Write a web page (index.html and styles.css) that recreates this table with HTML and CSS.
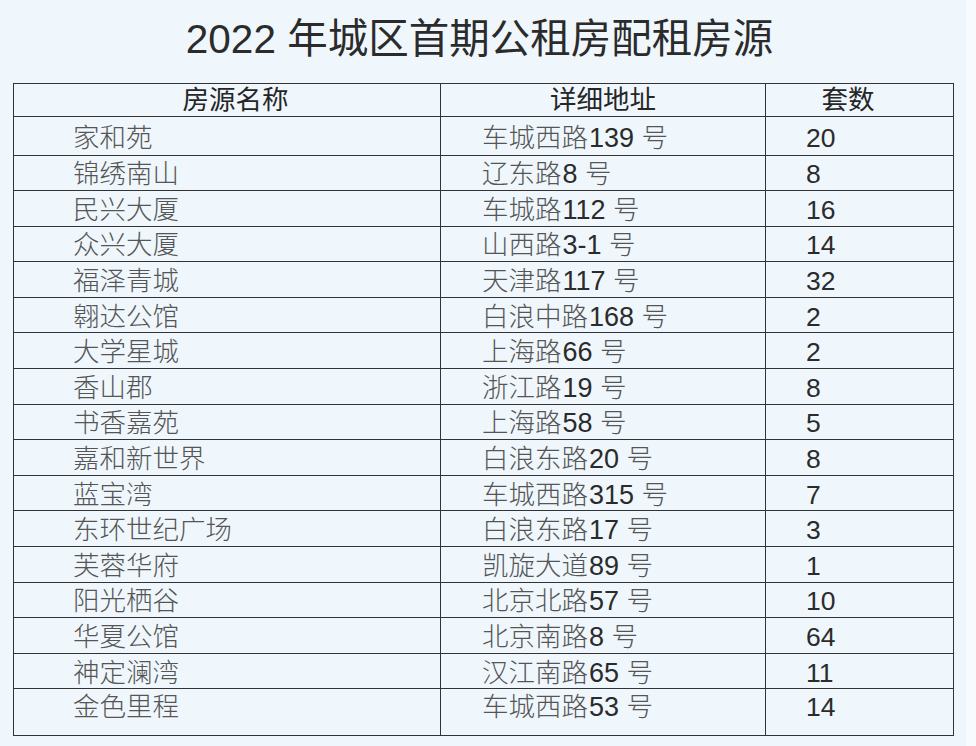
FILE: index.html
```html
<!DOCTYPE html>
<html lang="zh-CN">
<head>
<meta charset="utf-8">
<title>2022年城区首期公租房配租房源</title>
<link rel="stylesheet" href="styles.css">
</head>
<body>
<div class="sheet">
  <h1 class="title">2022 年城区首期公租房配租房源</h1>
  <table class="housing">
    <colgroup>
      <col class="c-name">
      <col class="c-addr">
      <col class="c-count">
    </colgroup>
    <thead>
      <tr>
        <th class="h-name">房源名称</th>
        <th class="h-addr">详细地址</th>
        <th class="h-count">套数</th>
      </tr>
    </thead>
    <tbody>
      <tr class="first"><td class="name">家和苑</td><td class="addr">车城西路<span class="num">139</span> 号</td><td class="count">20</td></tr>
      <tr><td class="name">锦绣南山</td><td class="addr">辽东路<span class="num">8</span> 号</td><td class="count">8</td></tr>
      <tr><td class="name">民兴大厦</td><td class="addr">车城路<span class="num">112</span> 号</td><td class="count">16</td></tr>
      <tr><td class="name">众兴大厦</td><td class="addr">山西路<span class="num">3-1</span> 号</td><td class="count">14</td></tr>
      <tr><td class="name">福泽青城</td><td class="addr">天津路<span class="num">117</span> 号</td><td class="count">32</td></tr>
      <tr><td class="name">翱达公馆</td><td class="addr">白浪中路<span class="num">168</span> 号</td><td class="count">2</td></tr>
      <tr><td class="name">大学星城</td><td class="addr">上海路<span class="num">66</span> 号</td><td class="count">2</td></tr>
      <tr><td class="name">香山郡</td><td class="addr">浙江路<span class="num">19</span> 号</td><td class="count">8</td></tr>
      <tr><td class="name">书香嘉苑</td><td class="addr">上海路<span class="num">58</span> 号</td><td class="count">5</td></tr>
      <tr><td class="name">嘉和新世界</td><td class="addr">白浪东路<span class="num">20</span> 号</td><td class="count">8</td></tr>
      <tr><td class="name">蓝宝湾</td><td class="addr">车城西路<span class="num">315</span> 号</td><td class="count">7</td></tr>
      <tr><td class="name">东环世纪广场</td><td class="addr">白浪东路<span class="num">17</span> 号</td><td class="count">3</td></tr>
      <tr><td class="name">芙蓉华府</td><td class="addr">凯旋大道<span class="num">89</span> 号</td><td class="count">1</td></tr>
      <tr><td class="name">阳光栖谷</td><td class="addr">北京北路<span class="num">57</span> 号</td><td class="count">10</td></tr>
      <tr><td class="name">华夏公馆</td><td class="addr">北京南路<span class="num">8</span> 号</td><td class="count">64</td></tr>
      <tr><td class="name">神定澜湾</td><td class="addr">汉江南路<span class="num">65</span> 号</td><td class="count">11</td></tr>
      <tr class="last"><td class="name">金色里程</td><td class="addr">车城西路<span class="num">53</span> 号</td><td class="count">14</td></tr>
    </tbody>
  </table>
</div>
</body>
</html>
```

FILE: styles.css
```css
html, body {
  margin: 0;
  padding: 0;
}

body {
  background: #f7fbfd;
  font-family: "Liberation Sans", "Noto Sans CJK SC", sans-serif;
  color: #333;
}

.sheet {
  width: 966px;
  height: 746px;
  background: #eff7fc;
  box-sizing: border-box;
  padding: 19px 0 0 13px;
  overflow: hidden;
}

.title {
  margin: 0;
  width: 940px;
  text-align: center;
  font-size: 40.5px;
  line-height: 40px;
  font-weight: 400;
  color: #2b2b2b;
  padding-right: 7px;
  box-sizing: border-box;
}

.housing {
  margin-top: 24px;
  border-collapse: collapse;
  table-layout: fixed;
  width: 940px;
  border: 1.5px solid #333;
}

.c-name { width: 427px; }
.c-addr { width: 325px; }
.c-count { width: 188px; }

.housing th,
.housing td {
  border: 1.5px solid #333;
  padding: 0;
  font-size: 26.5px;
  white-space: nowrap;
  overflow: hidden;
}

.housing th {
  height: 32px;
  font-weight: 400;
  color: #262626;
  text-align: center;
  vertical-align: middle;
  line-height: 30px;
}

.h-name { padding-left: 17px !important; }
.h-count { padding-right: 23px !important; }

.housing td {
  height: 31.6px;
  line-height: 30px;
  vertical-align: middle;
  padding-top: 3px;
}

.housing tr.first td {
  height: 33.5px;
  padding-top: 4px;
}

.housing tr.last td {
  height: 42.5px;
  vertical-align: top;
  padding-top: 3px;
}

.name {
  padding-left: 59px !important;
  color: #555;
  font-weight: 300;
}

.addr {
  padding-left: 41px !important;
  color: #555;
  font-weight: 300;
}

.num {
  color: #2b2b2b;
  font-weight: 400;
  font-size: 27px;
  margin-left: 1px;
}

.count {
  padding-left: 40px !important;
  color: #2b2b2b;
  font-size: 27px;
}
```
